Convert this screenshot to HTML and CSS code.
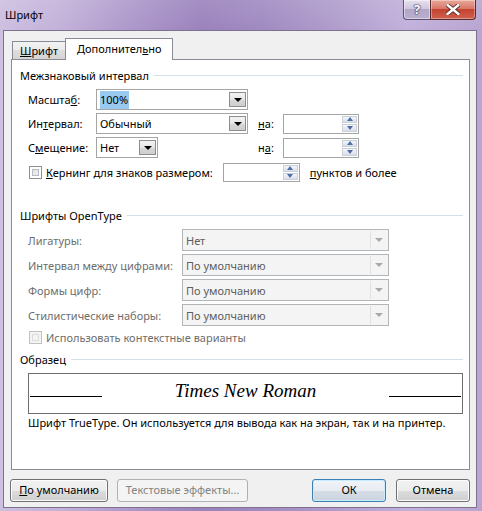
FILE: index.html
```html
<!DOCTYPE html>
<html lang="ru">
<head>
<meta charset="utf-8">
<title>Шрифт</title>
<link rel="stylesheet" href="styles.css">
</head>
<body>
<div class="window">
  <div class="titlebar">
    <span class="title">Шрифт</span>
    <div class="caption">
      <div class="cap-help">?</div>
      <div class="cap-close">
        <svg width="14" height="11" viewBox="0 0 14 11"><path d="M1.5 1 L12.5 10 M12.5 1 L1.5 10" stroke="#5a2a2a" stroke-width="4.2" stroke-linecap="round"/><path d="M1.5 1 L12.5 10 M12.5 1 L1.5 10" stroke="#fff" stroke-width="2.4" stroke-linecap="round"/></svg>
      </div>
    </div>
  </div>
  <div class="client">
    <div class="tabs">
      <div class="tab"><u>Ш</u>рифт</div>
      <div class="tab active">Дополнител<u>ь</u>но</div>
    </div>
    <div class="panel">
      <div class="group-title g1"><span>Межзнаковый интервал</span></div>

      <div class="row r1">
        <span class="lbl l68">Масшта<u>б</u>:</span>
        <div class="select w152"><span class="val"><span class="hl">100%</span></span><span class="drop"><i class="tri"></i></span></div>
      </div>
      <div class="row r2">
        <span class="lbl l68">Ин<u>т</u>ервал:</span>
        <div class="select w152"><span class="val">Обычный</span><span class="drop"><i class="tri"></i></span></div>
        <span class="lbl na"><u>н</u>а:</span>
        <div class="spin"><span class="spin-btns"><span class="sb"><i class="up"></i></span><span class="sb"><i class="dn"></i></span></span></div>
      </div>
      <div class="row r3">
        <span class="lbl l68">С<u>м</u>ещение:</span>
        <div class="select w62"><span class="val">Нет</span><span class="drop"><i class="tri"></i></span></div>
        <span class="lbl na2">н<u>а</u>:</span>
        <div class="spin"><span class="spin-btns"><span class="sb"><i class="up"></i></span><span class="sb"><i class="dn"></i></span></span></div>
      </div>
      <div class="row r4">
        <span class="check"></span>
        <span class="lbl kern"><u>К</u>ернинг для знаков размером:</span>
        <div class="spin spin-k"><span class="spin-btns"><span class="sb"><i class="up"></i></span><span class="sb"><i class="dn"></i></span></span></div>
        <span class="lbl pts"><u>п</u>унктов и более</span>
      </div>

      <div class="group-title g2"><span>Шрифты OpenType</span></div>

      <div class="row ot first">
        <span class="lbl dis l154">Лигатуры:</span>
        <div class="select dsel"><span class="val">Нет</span><span class="ddrop"><i class="tri"></i></span></div>
      </div>
      <div class="row ot">
        <span class="lbl dis l154">Интервал между цифрами:</span>
        <div class="select dsel"><span class="val">По умолчанию</span><span class="ddrop"><i class="tri"></i></span></div>
      </div>
      <div class="row ot">
        <span class="lbl dis l154">Формы цифр:</span>
        <div class="select dsel"><span class="val">По умолчанию</span><span class="ddrop"><i class="tri"></i></span></div>
      </div>
      <div class="row ot">
        <span class="lbl dis l154">Стилистические наборы:</span>
        <div class="select dsel"><span class="val">По умолчанию</span><span class="ddrop"><i class="tri"></i></span></div>
      </div>
      <div class="row ctx">
        <span class="check dcheck"></span>
        <span class="lbl dis kern">Использовать контекстные варианты</span>
      </div>

      <div class="group-title g3"><span>Образец</span></div>
      <div class="sample">
        <span class="uline left"></span>
        <span class="sample-text">Times New Roman</span>
        <span class="uline right"></span>
      </div>
      <div class="desc">Шрифт TrueType. Он используется для вывода как на экран, так и на принтер.</div>
    </div>
    <div class="buttons">
      <div class="btn b-def"><u>П</u>о умолчанию</div>
      <div class="btn b-fx disabled">Текстовые эффекты...</div>
      <div class="btn b-ok default">ОК</div>
      <div class="btn b-cancel">Отмена</div>
    </div>
  </div>
</div>
</body>
</html>
```

FILE: styles.css
```css
* { box-sizing: border-box; }
html, body { margin: 0; padding: 0; }
body {
  width: 482px;
  height: 511px;
  overflow: hidden;
  font-family: "Noto Sans", "Open Sans", sans-serif;
  font-size: 11px;
  color: #000;
}
u { text-decoration: underline; text-underline-offset: 1px; }

.window {
  width: 482px;
  height: 511px;
  display: flex;
  flex-direction: column;
  background:
    linear-gradient(180deg, rgba(255,255,255,0.10) 0%, rgba(255,255,255,0) 30px),
    linear-gradient(90deg, #cdbfe0 0%, #c3b2da 12%, #a993c8 30%, #9a82bc 42%, #a18bc2 55%, #b09dcc 70%, #c2b1db 85%, #b8a5d1 100%);
}

/* title bar */
.titlebar {
  height: 30px;
  display: flex;
  justify-content: space-between;
  align-items: flex-start;
}
.title {
  margin: 7px 0 0 5px;
  line-height: 16px;
  font-size: 11px;
  color: #000;
}
.caption { display: flex; margin-right: 6px; }
.cap-help {
  width: 27px;
  height: 20px;
  border: 1px solid #5f5470;
  border-top: none;
  border-right: none;
  border-radius: 0 0 0 4px;
  background: linear-gradient(180deg, #e6e1ee 0%, #cfc7dd 45%, #b4a8c9 50%, #b9aecd 100%);
  box-shadow: inset 0 0 0 1px rgba(255,255,255,0.45);
  color: #fff;
  font-weight: bold;
  font-size: 13px;
  line-height: 18px;
  text-align: center;
  text-shadow: 0 0 1px #3b3050, 0 0 1px #3b3050, 0 0 2px #3b3050;
}
.cap-close {
  width: 46px;
  height: 20px;
  border: 1px solid #5a2a2a;
  border-top: none;
  border-radius: 0 0 4px 0;
  background: linear-gradient(180deg, #e9a99b 0%, #d7786a 45%, #c44330 50%, #cf6150 100%);
  box-shadow: inset 0 0 0 1px rgba(255,255,255,0.35);
  display: flex;
  align-items: center;
  justify-content: center;
}

/* client */
.client {
  margin-left: 3px;
  width: 474px;
  height: 478px;
  border: 1px solid #7c728c;
  background: #f0f0f0;
  display: flex;
  flex-direction: column;
}

/* tabs */
.tabs {
  height: 28px;
  display: flex;
  align-items: flex-end;
  padding-left: 8px;
}
.tab {
  height: 18px;
  width: 54px;
  border: 1px solid #898c95;
  border-bottom: none;
  background: linear-gradient(180deg, #f2f2f2 0%, #ebebeb 50%, #dddddd 50%, #d5d5d5 100%);
  line-height: 17px;
  padding-left: 7px;
}
.tab.active {
  position: relative;
  z-index: 1;
  width: 108px;
  height: 22px;
  margin-left: -1px;
  margin-bottom: -1px;
  background: #fff;
  padding-left: 11px;
  line-height: 20px;
}

/* panel */
.panel {
  margin-left: 7px;
  width: 459px;
  height: 411px;
  border: 1px solid #898c95;
  background: #fff;
  padding: 0 6px 0 8px;
  display: flex;
  flex-direction: column;
}
.group-title {
  height: 16px;
  display: flex;
  align-items: center;
  line-height: 16px;
}
.group-title::after {
  content: "";
  flex: 1;
  height: 1px;
  margin-left: 5px;
  margin-top: -1px;
  background: #d5dfe5;
}
.g1 { margin-top: 8px; }
.g2 { margin-top: 26px; }
.g3 { margin-top: 7px; }

.row {
  display: flex;
  align-items: center;
  margin-left: 8px;
}
.r1 { margin-top: 5px; height: 21px; }
.r2 { margin-top: 3px; height: 21px; }
.r3 { margin-top: 3px; height: 21px; }
.r4 { margin-top: 4px; height: 20px; }
.ot { margin-top: 3px; height: 22px; }
.ot.first { margin-top: 5px; }
.ctx { margin-top: 3px; height: 16px; }

.lbl { white-space: nowrap; }
.l68 { width: 68px; }
.l154 { width: 154px; }
.na { width: 25px; margin-left: 10px; }
.na2 { width: 25px; margin-left: 100px; }
.kern { margin-left: 4px; }
.pts { margin-left: 10px; }
.dis { color: #6d6d6d; }

/* selects */
.select {
  height: 100%;
  border: 1px solid #a5a5a5;
  background: #fff;
  display: flex;
  align-items: center;
}
.w152 { width: 152px; }
.w62 { width: 62px; }
.select .val { flex: 1; padding-left: 3px; white-space: nowrap; }
.hl { background: #99c9ef; padding: 1px 1px 2px 0; }
.drop {
  width: 17px;
  height: 15px;
  margin-right: 1px;
  border: 1px solid #8d8d8d;
  background: linear-gradient(180deg, #f3f3f3 0%, #e6e6e6 50%, #d6d6d6 51%, #cfcfcf 100%);
  display: flex;
  align-items: center;
  justify-content: center;
}
.tri {
  width: 0;
  height: 0;
  border-left: 4px solid transparent;
  border-right: 4px solid transparent;
  border-top: 4px solid #000;
}
.dsel {
  width: 207px;
  background: #f4f4f4;
  border-color: #b3b6b8;
  color: #5e5e5e;
}
.ddrop {
  width: 17px;
  height: 18px;
  margin-right: 1px;
  border-left: 1px solid #e0e0e0;
  display: flex;
  align-items: center;
  justify-content: center;
}
.ddrop .tri { border-top-color: #a9a9a9; border-left-width: 4px; border-right-width: 4px; }

/* spinners */
.spin {
  width: 76px;
  height: 20px;
  border: 1px solid #a5a5a5;
  background: #fff;
  display: flex;
  justify-content: flex-end;
  padding: 1px;
}
.spin-k { width: 77px; margin-left: 10px; height: 19px; }
.spin-btns {
  width: 15px;
  display: flex;
  flex-direction: column;
  gap: 1px;
}
.sb {
  flex: 1;
  background: linear-gradient(180deg, #f4f6f9 0%, #e6eaf0 50%, #d9dfe8 100%);
  border: 1px solid #c9d0da;
  display: flex;
  align-items: center;
  justify-content: center;
}
.up, .dn {
  width: 0;
  height: 0;
  border-left: 3.5px solid transparent;
  border-right: 3.5px solid transparent;
}
.up { border-bottom: 4px solid #4f6ea5; }
.dn { border-top: 4px solid #4f6ea5; }

/* checkbox */
.check {
  width: 13px;
  height: 13px;
  border: 1px solid #8e8f8f;
  display: inline-block;
  box-shadow: inset 0 0 0 2px #fff, inset 0 0 0 3px #b8bcc2;
  background: linear-gradient(135deg, #dcdcdc 0%, #f8f8f8 100%);
  margin-left: 1px;
}
.dcheck {
  border-color: #c1c1c1;
  box-shadow: inset 0 0 0 2px #f4f4f4, inset 0 0 0 3px #dcdcdc;
  background: #f4f4f4;
}

/* sample */
.sample {
  margin-top: 5px;
  margin-left: 8px;
  height: 41px;
  border: 1px solid #6e6e6e;
  display: flex;
  align-items: baseline;
  padding-top: 6px;
}
.uline {
  width: 72px;
  height: 1px;
  background: #000;
}
.uline.left { margin-left: 1px; }
.uline.right { margin-right: 1px; }
.sample-text {
  flex: 1;
  text-align: center;
  font-family: "Liberation Serif", "Times New Roman", serif;
  font-style: italic;
  font-size: 19px;
  line-height: 22px;
}
.desc {
  margin-top: 1px;
  margin-left: 8px;
  line-height: 16px;
  height: 16px;
  white-space: nowrap;
}

/* buttons */
.buttons {
  margin-top: 9px;
  height: 23px;
  display: flex;
  padding-left: 6px;
}
.btn {
  height: 23px;
  border: 1px solid #707070;
  border-radius: 3px;
  background: linear-gradient(180deg, #f2f2f2 0%, #ebebeb 50%, #dddddd 50%, #cfcfcf 100%);
  box-shadow: inset 0 0 0 1px #fcfcfc;
  text-align: center;
  line-height: 20px;
  white-space: nowrap;
}
.b-def { width: 98px; }
.b-fx { width: 131px; margin-left: 9px; }
.b-ok { width: 74px; margin-left: 64px; }
.b-cancel { width: 74px; margin-left: 10px; }
.btn.disabled {
  border-color: #adb2b5;
  background: #f4f4f4;
  box-shadow: none;
  color: #838383;
}
.btn.default {
  border-color: #3c7fb1;
  box-shadow: inset 0 0 0 1px #c8ecff;
  background: linear-gradient(180deg, #f1f4f8 0%, #e7ecf2 50%, #d6dde6 50%, #cbd4df 100%);
}
```
